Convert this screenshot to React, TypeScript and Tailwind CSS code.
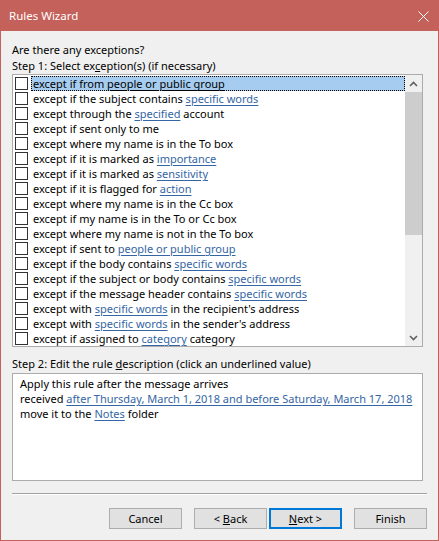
import React from 'react';

type Part = string | { link: string };

const rows: Part[][] = [
  ['except if from ', { link: 'people or public group' }],
  ['except if the subject contains ', { link: 'specific words' }],
  ['except through the ', { link: 'specified' }, ' account'],
  ['except if sent only to me'],
  ['except where my name is in the To box'],
  ['except if it is marked as ', { link: 'importance' }],
  ['except if it is marked as ', { link: 'sensitivity' }],
  ['except if it is flagged for ', { link: 'action' }],
  ['except where my name is in the Cc box'],
  ['except if my name is in the To or Cc box'],
  ['except where my name is not in the To box'],
  ['except if sent to ', { link: 'people or public group' }],
  ['except if the body contains ', { link: 'specific words' }],
  ['except if the subject or body contains ', { link: 'specific words' }],
  ['except if the message header contains ', { link: 'specific words' }],
  ['except with ', { link: 'specific words' }, " in the recipient's address"],
  ['except with ', { link: 'specific words' }, " in the sender's address"],
  ['except if assigned to ', { link: 'category' }, ' category'],
];

function Link({ children, selected }: { children: React.ReactNode; selected?: boolean }) {
  return (
    <span className={selected ? 'underline underline-offset-2 text-black' : 'underline underline-offset-2 text-[#3465a4]'}>
      {children}
    </span>
  );
}

function Row({ parts, selected }: { parts: Part[]; selected?: boolean }) {
  return (
    <div className="h-[15px] flex items-center">
      <div className="w-[13px] h-[13px] ml-[1px] border border-[#333333] bg-white shrink-0" />
      <div
        className={
          selected
            ? 'ml-[3px] flex-1 h-[15px] leading-[13px] pl-[1px] bg-[#a6cdf0] border border-dotted border-black whitespace-nowrap'
            : 'ml-[3px] flex-1 h-[15px] leading-[15px] pl-[2px] whitespace-nowrap'
        }
      >
        {parts.map((p, i) =>
          typeof p === 'string' ? <span key={i}>{p}</span> : <Link key={i} selected={selected}>{p.link}</Link>
        )}
      </div>
    </div>
  );
}

function Button({ children, focused }: { children: React.ReactNode; focused?: boolean }) {
  return (
    <button
      type="button"
      className={
        focused
          ? 'w-[73px] h-[21px] bg-[#e1e1e1] border-2 border-[#0078d7] text-[11px] leading-none text-black'
          : 'w-[73px] h-[21px] bg-[#e1e1e1] border border-[#adadad] text-[11px] leading-none text-black'
      }
    >
      {children}
    </button>
  );
}

export default function App() {
  return (
    <div
      className="w-[439px] h-[541px] border border-[#c4615b] bg-[#f0f0f0] flex flex-col text-[11px] text-black"
      style={{ fontFamily: '"Noto Sans", "Open Sans", sans-serif' }}
    >
      {/* Title bar */}
      <div className="h-[30px] bg-[#c4615b] flex items-center justify-between pl-[8px] pr-[9px] shrink-0">
        <span className="text-white text-[11.5px]">Rules Wizard</span>
        <svg width="11" height="11" viewBox="0 0 11 11">
          <path d="M0.5 0.5 L10.5 10.5 M10.5 0.5 L0.5 10.5" stroke="white" strokeWidth="1" />
        </svg>
      </div>

      <div className="flex-1 flex flex-col px-[11px] pt-[11px]">
        <div className="leading-[16px] h-[16px]">Are there any exceptions?</div>
        <div className="leading-[16px] h-[16px]">
          Step 1: Select ex<span className="underline">c</span>eption(s) (if necessary)
        </div>

        {/* Exception list */}
        <div className="w-[411px] h-[273px] border border-[#acacac] bg-white flex overflow-hidden">
          <div className="flex-1 pt-[1px] pl-[1px] overflow-hidden">
            {rows.map((r, i) => (
              <Row key={i} parts={r} selected={i === 0} />
            ))}
          </div>
          <div className="w-[17px] bg-[#f0f0f0] flex flex-col shrink-0">
            <div className="h-[17px] flex items-center justify-center">
              <svg width="9" height="6" viewBox="0 0 9 6">
                <path d="M1 5 L4.5 1.5 L8 5" stroke="#606060" strokeWidth="1.6" fill="none" />
              </svg>
            </div>
            <div className="h-[143px] bg-[#cdcdcd]" />
            <div className="flex-1" />
            <div className="h-[17px] flex items-center justify-center">
              <svg width="9" height="6" viewBox="0 0 9 6">
                <path d="M1 1 L4.5 4.5 L8 1" stroke="#606060" strokeWidth="1.6" fill="none" />
              </svg>
            </div>
          </div>
        </div>

        <div className="leading-[16px] h-[16px] mt-[9px]">
          Step 2: Edit the rule <span className="underline">d</span>escription (click an underlined value)
        </div>

        {/* Description */}
        <div className="w-[411px] h-[108px] mt-[1px] border border-[#acacac] bg-white pl-[7px] pt-[2px] leading-[15px] whitespace-nowrap">
          <div>Apply this rule after the message arrives</div>
          <div>
            received <Link>after Thursday, March 1, 2018 and before Saturday, March 17, 2018</Link>
          </div>
          <div>
            move it to the <Link>Notes</Link> folder
          </div>
        </div>

        <div className="mt-[12px] w-[415px] h-[2px] border-t border-[#a0a0a0] border-b border-b-white" />

        <div className="flex justify-end items-center mt-[13px]">
          <Button>Cancel</Button>
          <div className="ml-[12px]">
            <Button>
              &lt; <span className="underline">B</span>ack
            </Button>
          </div>
          <div className="ml-[2px]">
            <Button focused>
              <span className="underline">N</span>ext &gt;
            </Button>
          </div>
          <div className="ml-[12px]">
            <Button>Finish</Button>
          </div>
        </div>
      </div>
    </div>
  );
}
